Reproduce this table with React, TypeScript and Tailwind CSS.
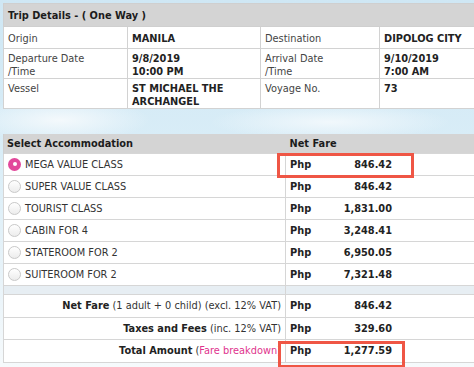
const font = { fontFamily: '"DejaVu Sans", Verdana, sans-serif' };

interface FareRow {
   name: string;
   amount: string;
   selected?: boolean;
}

const fares: FareRow[] = [
   { name: 'MEGA VALUE CLASS', amount: '846.42', selected: true },
   { name: 'SUPER VALUE CLASS', amount: '846.42' },
   { name: 'TOURIST CLASS', amount: '1,831.00' },
   { name: 'CABIN FOR 4', amount: '3,248.41' },
   { name: 'STATEROOM FOR 2', amount: '6,950.05' },
   { name: 'SUITEROOM FOR 2', amount: '7,321.48' },
];

function Radio({ checked }: { checked?: boolean }) {
   return checked ? (
      <span className="flex h-[13px] w-[13px] shrink-0 items-center justify-center rounded-full bg-[#e2489b]">
         <span className="h-[4px] w-[4px] rounded-full bg-white" />
      </span>
   ) : (
      <span className="h-[13px] w-[13px] shrink-0 rounded-full border border-[#c9c9c9] bg-gradient-to-b from-white to-[#ececec]" />
   );
}

function Amount({ value }: { value: string }) {
   return (
      <div className="flex w-[102px] justify-between font-bold text-[#222]">
         <span>Php</span>
         <span>{value}</span>
      </div>
   );
}

function RedBox({ className }: { className: string }) {
   return <div className={`pointer-events-none absolute border-[3px] border-[#ef5645] ${className}`} />;
}

export default function App() {
   return (
      <div
         style={font}
         className="relative h-[367px] w-[474px] overflow-hidden bg-[radial-gradient(ellipse_90px_22px_at_60px_120px,#f4f9fc,transparent),radial-gradient(ellipse_120px_18px_at_330px_122px,#f1f8fc,transparent),linear-gradient(180deg,#cfe7f4_0%,#d9edf7_40%,#e8f3f9_75%,#f6fafc_100%)] pt-[3px] pl-[3px] text-[9.8px] leading-[13px] text-[#444]"
      >
         {/* trip details */}
         <table className="w-[520px] table-fixed border-collapse">
            <colgroup>
               <col className="w-[124px]" />
               <col className="w-[133px]" />
               <col className="w-[119px]" />
               <col />
            </colgroup>
            <thead>
               <tr>
                  <th
                     colSpan={4}
                     className="h-[23px] border border-[#cfcfcf] bg-[#d4d4d4] px-[4px] text-left align-middle font-bold text-[#1c1c1c]"
                  >
                     Trip Details - ( One Way )
                  </th>
               </tr>
            </thead>
            <tbody className="bg-white">
               <tr className="h-[22px]">
                  <td className="border border-[#d2d2d2] px-[4px] align-top pt-[5px]">Origin</td>
                  <td className="border border-[#d2d2d2] px-[4px] align-top pt-[5px] font-bold text-[#222]">MANILA</td>
                  <td className="border border-[#d2d2d2] px-[4px] align-top pt-[5px]">Destination</td>
                  <td className="border border-[#d2d2d2] px-[4px] align-top pt-[5px] font-bold text-[#222]">DIPOLOG CITY</td>
               </tr>
               <tr className="h-[30px]">
                  <td className="border border-[#d2d2d2] px-[4px] align-top pt-[3px]">
                     Departure Date
                     <br />
                     /Time
                  </td>
                  <td className="border border-[#d2d2d2] px-[4px] align-top pt-[3px] font-bold text-[#222]">
                     9/8/2019
                     <br />
                     10:00 PM
                  </td>
                  <td className="border border-[#d2d2d2] px-[4px] align-top pt-[3px]">
                     Arrival Date
                     <br />
                     /Time
                  </td>
                  <td className="border border-[#d2d2d2] px-[4px] align-top pt-[3px] font-bold text-[#222]">
                     9/10/2019
                     <br />
                     7:00 AM
                  </td>
               </tr>
               <tr className="h-[30px]">
                  <td className="border border-[#d2d2d2] px-[4px] align-top pt-[3px]">Vessel</td>
                  <td className="border border-[#d2d2d2] px-[4px] align-top pt-[3px] font-bold text-[#222]">
                     ST MICHAEL THE
                     <br />
                     ARCHANGEL
                  </td>
                  <td className="border border-[#d2d2d2] px-[4px] align-top pt-[3px]">Voyage No.</td>
                  <td className="border border-[#d2d2d2] px-[4px] align-top pt-[3px] font-bold text-[#222]">73</td>
               </tr>
            </tbody>
         </table>

         {/* accommodation + totals */}
         <div className="relative mt-[25px]">
            <table className="w-[520px] table-fixed border-collapse">
               <colgroup>
                  <col className="w-[282px]" />
                  <col />
               </colgroup>
               <thead>
                  <tr className="h-[19px] bg-[#d4d4d4] text-left font-bold text-[#1c1c1c]">
                     <th className="border-l border-[#cfcfcf] px-[3px] align-middle">Select Accommodation</th>
                     <th className="px-[4px] align-middle">Net Fare</th>
                  </tr>
               </thead>
               <tbody className="bg-white">
                  {fares.map((fare) => (
                     <tr key={fare.name} className="h-[22px]">
                        <td className="border border-[#d6d6d6] px-[4px] align-middle">
                           <div className="flex items-center gap-[4px] text-[#333]">
                              <Radio checked={fare.selected} />
                              <span>{fare.name}</span>
                           </div>
                        </td>
                        <td className="border border-[#d6d6d6] px-[4px] align-middle">
                           <Amount value={fare.amount} />
                        </td>
                     </tr>
                  ))}
                  <tr className="h-[9px] bg-[#e7eef3]">
                     <td className="border-x border-[#d6d6d6]" />
                     <td className="border-x border-[#d6d6d6]" />
                  </tr>
                  <tr className="h-[23px]">
                     <td className="border border-[#d6d6d6] px-[4px] text-right align-middle text-[#333]">
                        <b className="text-[#222]">Net Fare</b> (1 adult + 0 child) (excl. 12% VAT)
                     </td>
                     <td className="border border-[#d6d6d6] px-[4px] align-middle">
                        <Amount value="846.42" />
                     </td>
                  </tr>
                  <tr className="h-[22px]">
                     <td className="border border-[#d6d6d6] px-[4px] text-right align-middle text-[#333]">
                        <b className="text-[#222]">Taxes and Fees</b> (inc. 12% VAT)
                     </td>
                     <td className="border border-[#d6d6d6] px-[4px] align-middle">
                        <Amount value="329.60" />
                     </td>
                  </tr>
                  <tr className="h-[23px]">
                     <td className="border border-[#d6d6d6] px-[4px] text-right align-middle text-[#333]">
                        <b className="text-[#222]">Total Amount</b> (<span className="text-[#e0338d]">Fare breakdown</span>)
                     </td>
                     <td className="border border-[#d6d6d6] px-[4px] align-middle">
                        <Amount value="1,277.59" />
                     </td>
                  </tr>
               </tbody>
            </table>
            <RedBox className="left-[274px] top-[19px] h-[25px] w-[137px]" />
            <RedBox className="left-[275px] top-[207px] h-[27px] w-[127px]" />
         </div>
      </div>
   );
}
